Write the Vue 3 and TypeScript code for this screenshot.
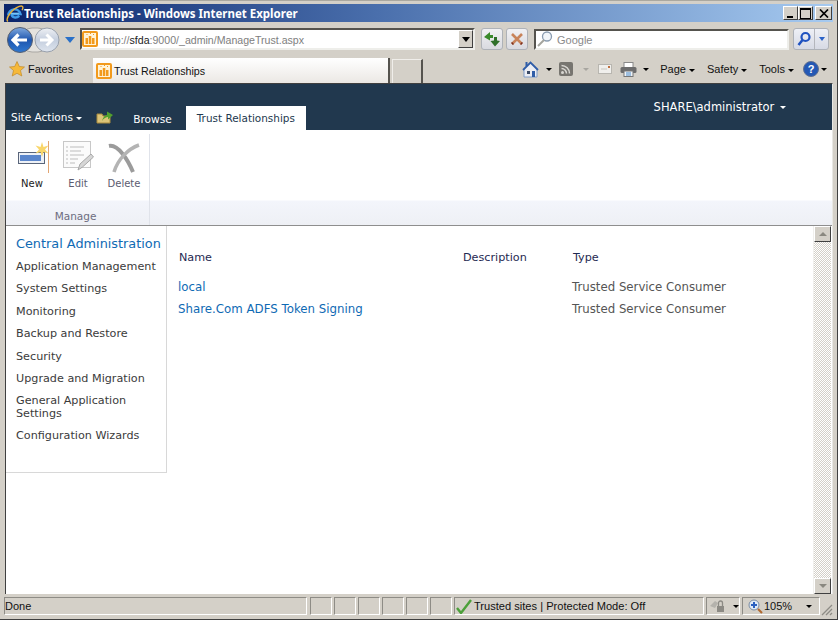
<script setup lang="ts">
const statusCells = [0, 1, 2, 3, 4, 5]
const navLinks = [
  'Application Management',
  'System Settings',
  'Monitoring',
  'Backup and Restore',
  'Security',
  'Upgrade and Migration',
  'General Application Settings',
  'Configuration Wizards'
]
const rows = [
  { name: 'local', type: 'Trusted Service Consumer' },
  { name: 'Share.Com ADFS Token Signing', type: 'Trusted Service Consumer' }
]
</script>

<template>
  <div class="window">
    <div class="titlebar">
      <svg class="ie-logo" width="19" height="19" viewBox="0 0 20 19">
        <path d="M3.500 11.500a6.500 6.500 0 0 1 12.800-1.500H7c0 4 5 5 8 2" fill="none" stroke="#3f9be8" stroke-width="2.600" />
        <path d="M6.500 9.500h8" stroke="#7cc4f4" stroke-width="1.500" />
        <path d="M3 18C0 15 7 5 15 2c3-1 5 0 3 4" fill="none" stroke="#e8b23a" stroke-width="1.500" />
      </svg>
      <span class="title-text">Trust Relationships - Windows Internet Explorer</span>
      <div class="winbtns">
        <span class="winbtn"><i class="min" /></span>
        <span class="winbtn"><i class="max" /></span>
        <span class="winbtn">
          <svg width="10" height="9" viewBox="0 0 10 9"><path d="M1 0.500l8 8M9 0.500l-8 8" stroke="#000" stroke-width="1.700" /></svg>
        </span>
      </div>
    </div>

    <div class="navrow">
      <div class="backfwd">
        <svg width="58" height="28" viewBox="0 0 58 28">
          <defs>
            <linearGradient id="backFill" x1="0" y1="0" x2="0" y2="1">
              <stop offset="0" stop-color="#7fa8de" />
              <stop offset=".5" stop-color="#1f56ae" />
              <stop offset="1" stop-color="#2f78d0" />
            </linearGradient>
            <linearGradient id="fwdFill" x1="0" y1="0" x2="0" y2="1">
              <stop offset="0" stop-color="#eef0f4" />
              <stop offset=".5" stop-color="#c4cede" />
              <stop offset="1" stop-color="#dfe5ee" />
            </linearGradient>
          </defs>
          <rect x="14" y="2" width="30" height="24" rx="12" fill="#e4e2de" stroke="#aaa8a4" />
          <circle cx="41" cy="14" r="12" fill="url(#fwdFill)" stroke="#98a0ac" />
          <path d="M34 14h12M40.500 8.500l5.500 5.500-5.500 5.500" fill="none" stroke="#fff" stroke-width="3" />
          <circle cx="14" cy="14" r="12.500" fill="url(#backFill)" stroke="#555e70" />
          <path d="M7 14h14M12.500 8.500L7 14l5.500 5.500" fill="none" stroke="#fff" stroke-width="3.200" />
        </svg>
        <svg class="navdrop" width="10" height="6" viewBox="0 0 10 6"><path d="M0 0h10L5 6z" fill="#2a70c8" /></svg>
      </div>
      <div class="address">
        <svg class="favicon" width="16" height="16" viewBox="0 0 16 16">
          <rect width="16" height="16" rx="2" fill="#f29a1c" />
          <rect x="2" y="2" width="12" height="12" fill="#fff3d8" />
          <path d="M3.500 7h2.500v6H3.500zM6.800 5h2.500v8H6.800zM10 7h2.500v6H10z" fill="#f29a1c" />
          <path d="M4.500 3.500h1M8 2.500h1M11 3.500h1" stroke="#f29a1c" />
        </svg>
        <span class="url">http://<b>sfda</b>:9000/_admin/ManageTrust.aspx</span>
        <span class="combo"><i /></span>
      </div>
      <span class="toolbtn refresh">
        <svg width="18" height="17" viewBox="0 0 18 17">
          <path d="M7 1L1 6l6 3.500V7h3V4H7z" fill="#3a8a2c" />
          <path d="M12 15.500l5-5.500-3-.5V6h-3v3.500L7.500 10z" fill="#2f6f2a" />
        </svg>
      </span>
      <span class="toolbtn stop">
        <svg width="14" height="14" viewBox="0 0 14 14">
          <path d="M2 2l10 10M12 2L2 12" stroke="#c8835a" stroke-width="2.600" />
          <path d="M3 11l-1 1M11 11l1 1" stroke="#7a2e20" stroke-width="2.600" />
        </svg>
      </span>
      <div class="search">
        <svg width="18" height="18" viewBox="0 0 18 18">
          <circle cx="11" cy="6.500" r="4.500" fill="#f2f6fa" stroke="#8a9cb0" stroke-width="1.300" />
          <path d="M8 10l-6 6" stroke="#a4a49e" stroke-width="2" />
        </svg>
        <span class="google">Google</span>
      </div>
      <div class="searchgo">
        <span class="go">
          <svg width="16" height="16" viewBox="0 0 16 16">
            <circle cx="9.500" cy="6" r="4" fill="none" stroke="#1f52c0" stroke-width="2.200" />
            <path d="M6.500 9l-4 5" stroke="#1f52c0" stroke-width="2.600" />
          </svg>
        </span>
        <span class="godrop"><i /></span>
      </div>
    </div>

    <div class="tabrow">
      <div class="favorites">
        <svg width="16" height="16" viewBox="0 0 16 16">
          <path d="M8 .5l2.300 5 5.200.5-4 3.500 1.300 5.500L8 12.300 3.200 15l1.300-5.500-4-3.500 5.200-.5z" fill="#f6b93a" stroke="#c08a2a" stroke-width=".7" />
        </svg>
        <span>Favorites</span>
      </div>
      <div class="tab">
        <svg class="favicon" width="16" height="16" viewBox="0 0 16 16">
          <rect width="16" height="16" rx="2" fill="#f29a1c" />
          <rect x="2" y="2" width="12" height="12" fill="#fff3d8" />
          <path d="M3.500 7h2.500v6H3.500zM6.800 5h2.500v8H6.800zM10 7h2.500v6H10z" fill="#f29a1c" />
          <path d="M4.500 3.500h1M8 2.500h1M11 3.500h1" stroke="#f29a1c" />
        </svg>
        <span class="tab-text">Trust Relationships</span>
      </div>
      <div class="newtab" />
      <div class="cmdbar">
        <svg class="home" width="17" height="17" viewBox="0 0 17 17">
          <path d="M8.500 1.500L2 8v8h13V8z" fill="#eceef4" stroke="#7e9cc8" />
          <path d="M1 9l7.500-7.500L16 9" fill="none" stroke="#2f5da8" stroke-width="1.800" />
          <rect x="3.500" y="1" width="2" height="4" fill="#2f5da8" />
          <rect x="5" y="10" width="3" height="3" fill="#3a4a66" />
          <rect x="10" y="10" width="3" height="6" fill="#2f5da8" />
        </svg>
        <i class="caret dark gap1" />
        <svg class="rss" width="14" height="14" viewBox="0 0 14 14">
          <rect width="14" height="14" rx="2" fill="#777570" />
          <circle cx="3.500" cy="10.500" r="1.500" fill="#d9d7d2" />
          <path d="M2.500 6.500a5 5 0 0 1 5 5M2.500 3.500a8 8 0 0 1 8 8" fill="none" stroke="#d9d7d2" stroke-width="1.500" />
        </svg>
        <i class="caret pale gap2" />
        <svg class="mail" width="14" height="10" viewBox="0 0 14 10">
          <rect x=".5" y=".5" width="13" height="9" fill="#f0efec" stroke="#b8b6b0" />
          <rect x="10" y="2" width="2" height="2" fill="#c07040" />
          <path d="M3 5h6" stroke="#c8c6c0" />
        </svg>
        <svg class="printer" width="17" height="15" viewBox="0 0 17 15">
          <rect x="4" y="0.500" width="9" height="6" fill="#fff" stroke="#888" />
          <rect x="0.500" y="5" width="16" height="6" rx="1.500" fill="#6c6c6c" />
          <rect x="4" y="9" width="9" height="5.500" fill="#eef2f6" stroke="#777" />
          <path d="M6 11h5M6 13h5" stroke="#4a8ac8" />
        </svg>
        <i class="caret dark gap3" />
        <span class="cmd first">Page <i class="caret dark" /></span>
        <span class="cmd">Safety <i class="caret dark" /></span>
        <span class="cmd">Tools <i class="caret dark" /></span>
        <svg class="help" width="16" height="16" viewBox="0 0 16 16">
          <circle cx="8" cy="8" r="7.500" fill="#2458b4" stroke="#607090" />
          <text x="8" y="12" text-anchor="middle" fill="#fff" font-size="11" font-weight="700" font-family="Liberation Sans, sans-serif">?</text>
        </svg>
        <i class="caret dark helpcaret" />
      </div>
    </div>

    <div class="page">
      <div class="site-header">
        <div class="ribbon-tabs">
          <span class="site-actions">Site Actions <i class="caret light" /></span>
          <svg class="navup" width="18" height="16" viewBox="0 0 18 16">
            <path d="M1 5h5l1 2h7v7H1z" fill="#dcc478" stroke="#a98b3c" />
            <path d="M6 12c1-4 3-6 5-6V2.500l6 3.500-5 4.500V8c-2 0-4 1-6 4z" fill="#52a02e" />
          </svg>
          <span class="rtab">Browse</span>
          <span class="rtab active">Trust Relationships</span>
        </div>
        <div class="user">SHARE\administrator <i class="caret light" /></div>
      </div>

      <div class="ribbon">
        <div class="group">
          <div class="buttons">
            <div class="rbtn active-btn">
              <svg width="34" height="32" viewBox="0 0 34 32">
                <rect x="3.500" y="11.500" width="26" height="11" fill="#eef1f6" stroke="#59657a" />
                <rect x="5" y="14" width="21" height="6" fill="#5a86cc" />
                <path d="M27 1l1.500 5 5-1.500-3.500 4 3.500 4-5-1.500-1.500 5-1.500-5-5 1.500 3.500-4-3.500-4 5 1.500z" fill="#f9d66a" />
                <path d="M33.500 0v32" stroke="#e2a572" />
              </svg>
              <span>New</span>
            </div>
            <div class="rbtn">
              <svg width="32" height="32" viewBox="0 0 32 32">
                <rect x="1.500" y="0.500" width="27" height="26" fill="#fbfbfb" stroke="#c8c8c8" />
                <path d="M8 6h14M4 6h2M8 10h11M4 10h2M8 14h14M4 14h2M8 18h8M4 18h2M8 22h5M4 22h2" stroke="#bdbdbd" />
                <path d="M16 29l2-6 11-10 2.500 3-11 10z" fill="#d6d6d6" stroke="#a8a8a8" />
              </svg>
              <span>Edit</span>
            </div>
            <div class="rbtn">
              <svg width="32" height="32" viewBox="0 0 32 32">
                <path d="M1 5c9-2 19 14 24 26" fill="none" stroke="#9b9b9b" stroke-width="4" />
                <path d="M31 4C20 8 10 18 6 31" fill="none" stroke="#b4b4b4" stroke-width="3.500" />
              </svg>
              <span>Delete</span>
            </div>
          </div>
          <div class="group-label">Manage</div>
        </div>
        <div class="ribbon-rest" />
      </div>

      <div class="body">
        <div class="content">
          <nav class="sidenav">
            <a class="nav-head">Central Administration</a>
            <a v-for="link in navLinks" :key="link" class="nav-link">{{ link }}</a>
          </nav>
          <div class="main">
            <div class="row head">
              <span class="c-name">Name</span>
              <span class="c-desc">Description</span>
              <span class="c-type">Type</span>
            </div>
            <div v-for="row in rows" :key="row.name" class="row">
              <a class="c-name link">{{ row.name }}</a>
              <span class="c-desc" />
              <span class="c-type muted">{{ row.type }}</span>
            </div>
          </div>
        </div>
        <div class="scrollbar">
          <span class="sb-btn"><i class="up" /></span>
          <div class="sb-track" />
          <span class="sb-btn"><i class="down" /></span>
        </div>
      </div>
    </div>

    <div class="statusbar">
      <span class="st done">Done</span>
      <span v-for="c in statusCells" :key="c" class="st cell" />
      <span class="st zone">
        <svg width="16" height="15" viewBox="0 0 16 15"><path d="M1 9l4 5L15 1" fill="none" stroke="#4ca03a" stroke-width="2.400" /></svg>
        <span>Trusted sites | Protected Mode: Off</span>
      </span>
      <span class="st lock">
        <svg width="16" height="14" viewBox="0 0 16 14">
          <path d="M0 7l5-5 3 2-3 5z" fill="#b4b2ac" />
          <rect x="7" y="7" width="7" height="6" fill="#8c8a84" />
          <path d="M8.500 7V4a2 2 0 0 1 4 0v3" fill="none" stroke="#8c8a84" stroke-width="1.300" />
        </svg>
        <i class="caret dark" />
      </span>
      <span class="st zoom">
        <svg width="15" height="15" viewBox="0 0 15 15">
          <circle cx="6" cy="6" r="5" fill="#dfeaf6" stroke="#7a8ca4" />
          <path d="M6 3v6M3 6h6" stroke="#2a60c0" stroke-width="2" />
          <path d="M10 10l4 4" stroke="#b06a30" stroke-width="2.200" />
        </svg>
        <span>105%</span>
        <i class="caret dark zoomcaret" />
      </span>
      <svg class="grip" width="13" height="13" viewBox="0 0 13 13">
        <path d="M12 2L2 12M12 6l-6 6M12 10l-2 2" stroke="#8e8c86" stroke-width="1.300" />
      </svg>
    </div>
  </div>
</template>

<style scoped>
.window {
  width: 838px;
  height: 620px;
  box-sizing: border-box;
  padding: 3px 4px 3px;
  background: #d4d0c8;
  border-top: 1px solid #aaa8a0;
  border-bottom: 1px solid #404040;
  border-right: 1px solid #404040;
  display: flex;
  flex-direction: column;
  font-family: "Liberation Sans", "Noto Sans", sans-serif;
  overflow: hidden;
}
i {
  display: inline-block;
  font-style: normal;
}
.titlebar {
  height: 18px;
  flex: none;
  display: flex;
  align-items: center;
  background: linear-gradient(90deg, #0a246a 0%, #4a6fac 45%, #a6caf0 100%);
}
.ie-logo {
  margin: 0 0 0 1px;
  flex: none;
}
.title-text {
  color: #fff;
  font-family: "Noto Sans", sans-serif;
  font-size: 11.500px;
  font-weight: 700;
}
.winbtns {
  margin-left: auto;
  margin-right: 1px;
  display: flex;
}
.winbtn {
  width: 15px;
  height: 14px;
  box-sizing: border-box;
  background: #d4d0c8;
  border: 1px solid;
  border-color: #fff #404040 #404040 #fff;
  display: flex;
  align-items: center;
  justify-content: center;
}
.winbtn:last-child {
  width: 17px;
  margin-left: 2px;
}
.min {
  width: 6px;
  height: 2px;
  background: #000;
  margin-top: 7px;
  margin-right: 2px;
}
.max {
  width: 9px;
  height: 8px;
  border: 1px solid #000;
  border-top-width: 2px;
}
.navrow {
  height: 36px;
  flex: none;
  display: flex;
  align-items: center;
}
.backfwd {
  width: 75px;
  display: flex;
  align-items: center;
  padding-left: 2px;
  box-sizing: border-box;
  flex: none;
}
.navdrop {
  margin-left: 1px;
}
.address {
  width: 395px;
  height: 22px;
  margin: -2px 0 0 1px;
  flex: none;
  box-sizing: border-box;
  background: #fff;
  border: 2px solid;
  border-color: #55534e #eeeeea #eeeeea #55534e;
  display: flex;
  align-items: center;
  font-size: 10.600px;
  color: #7e7e7e;
}
.url {
  margin-left: 5px;
  padding-top: 1px;
}
.url b {
  font-weight: 400;
  color: #222;
}
.favicon {
  flex: none;
}
.combo {
  margin-left: auto;
  width: 15px;
  height: 18px;
  box-sizing: border-box;
  background: #d4d0c8;
  border: 1px solid;
  border-color: #fff #404040 #404040 #fff;
  display: flex;
  align-items: center;
  justify-content: center;
}
.combo i {
  border: 4px solid transparent;
  border-top: 5px solid #000;
  border-bottom: 0;
}
.toolbtn {
  width: 22px;
  height: 22px;
  margin-top: -2px;
  box-sizing: border-box;
  flex: none;
  border: 1px solid #aeb2b8;
  border-radius: 3px;
  background: linear-gradient(#f1f1f4, #d9dae0);
  display: flex;
  align-items: center;
  justify-content: center;
}
.refresh {
  margin-left: 6px;
}
.stop {
  margin-left: 3px;
}
.search {
  width: 255px;
  height: 21px;
  margin: -2px 0 0 6px;
  flex: none;
  box-sizing: border-box;
  background: #fff;
  border: 2px solid;
  border-color: #55534e #eeeeea #eeeeea #55534e;
  display: flex;
  align-items: center;
  gap: 3px;
  font-size: 11px;
  color: #8a8a8a;
}
.google {
  padding-top: 1px;
}
.searchgo {
  display: flex;
  height: 22px;
  margin: -2px 0 0 4px;
  box-sizing: border-box;
  border: 1px solid #aeb2b8;
  border-radius: 3px;
  background: linear-gradient(#eef0f6, #d7dae4);
}
.go {
  width: 20px;
  display: flex;
  align-items: center;
  justify-content: center;
  border-right: 1px solid #b4b6bc;
}
.godrop {
  width: 13px;
  display: flex;
  align-items: center;
  justify-content: center;
}
.godrop i {
  border: 3px solid transparent;
  border-top: 4px solid #2a62c8;
  border-bottom: 0;
}
.tabrow {
  height: 25px;
  flex: none;
  display: flex;
  align-items: flex-start;
  font-size: 11px;
  color: #111;
}
.favorites {
  width: 89px;
  height: 22px;
  display: flex;
  align-items: center;
  gap: 3px;
  padding-left: 5px;
  box-sizing: border-box;
  flex: none;
}
.tab {
  width: 297px;
  height: 25px;
  flex: none;
  box-sizing: border-box;
  background: linear-gradient(#fff, #ebe8e4);
  border-right: 2px solid #55534e;
  display: flex;
  align-items: center;
  gap: 2px;
  padding-left: 3px;
}
.tab-text {
  font-size: 10.700px;
}
.newtab {
  width: 31px;
  height: 24px;
  margin: 1px 0 0 2px;
  box-sizing: border-box;
  border: 1px solid #f0eeea;
  border-right: 2px solid #55534e;
  border-bottom: 0;
  flex: none;
}
.cmdbar {
  flex: 1;
  height: 22px;
  display: flex;
  align-items: center;
  justify-content: flex-end;
  padding-right: 6px;
}
.cmd {
  margin-left: 12px;
  white-space: nowrap;
}
.cmd.first {
  margin-left: 11px;
}
.cmd .caret {
  margin-left: 0;
}
.help {
  margin-left: 9px;
}
.helpcaret {
  margin-left: 1px;
}
.caret {
  border: 3px solid transparent;
  border-top: 3px solid #000;
  border-bottom: 0;
  vertical-align: middle;
  margin-left: 2px;
}
.caret.light {
  border-top-color: #fff;
}
.caret.pale {
  border-top-color: #a8a6a0;
}
.gap1 {
  margin-left: 7px;
}
.rss {
  margin-left: 7px;
}
.gap2 {
  margin-left: 10px;
}
.mail {
  margin-left: 9px;
}
.printer {
  margin-left: 8px;
}
.gap3 {
  margin-left: 6px;
}
.page {
  flex: 1;
  min-height: 0;
  display: flex;
  flex-direction: column;
  margin-left: 1px;
  border-top: 1px solid #404040;
  border-left: 1px solid #404040;
  border-right: 1px solid #e8e8e4;
  background: #fff;
  font-family: "DejaVu Sans", Verdana, sans-serif;
  font-size: 11.500px;
}
.site-header {
  height: 46px;
  flex: none;
  background: #21384e;
  color: #fff;
  display: flex;
  align-items: flex-end;
  justify-content: space-between;
}
.user {
  align-self: flex-start;
  margin: 16px 46px 0 0;
  line-height: 14px;
}
.ribbon-tabs {
  display: flex;
  align-items: flex-end;
  height: 24px;
}
.site-actions {
  align-self: center;
  margin: 0 0 2px 5px;
  font-size: 10.500px;
  white-space: nowrap;
}
.site-actions .caret {
  margin-left: 0;
}
.navup {
  align-self: center;
  margin: 0 0 3px 14px;
}
.rtab {
  padding: 0 12px;
  height: 24px;
  line-height: 26px;
  font-size: 10.600px;
  margin-left: 7px;
  white-space: nowrap;
}
.rtab + .rtab {
  margin-left: 2px;
}
.rtab.active {
  background: #fff;
  color: #22384e;
  line-height: 25px;
  padding: 0 11px;
  font-size: 10.450px;
}
.ribbon {
  height: 96px;
  flex: none;
  display: flex;
  border-bottom: 1px solid #8e8e8e;
  box-sizing: border-box;
  background: linear-gradient(#fff 0, #fff 70px, #f3f5fb 71px, #eef0f5 100%);
}
.group {
  width: 144px;
  flex: none;
  display: flex;
  flex-direction: column;
  border-right: 1px solid #e0e3ea;
  box-sizing: border-box;
  margin-top: 4px;
}
.buttons {
  height: 66px;
  display: flex;
  padding: 7px 0 0 3px;
  box-sizing: border-box;
}
.rbtn {
  width: 46px;
  display: flex;
  flex-direction: column;
  align-items: center;
  font-size: 10px;
  color: #5c5c70;
  gap: 5px;
}
.active-btn {
  color: #222;
}
.group-label {
  flex: 1;
  text-align: center;
  font-size: 10.500px;
  color: #6d6d80;
  padding-top: 10px;
  padding-right: 4px;
}
.ribbon-rest {
  flex: 1;
}
.body {
  flex: 1;
  min-height: 0;
  display: flex;
}
.content {
  flex: 1;
  display: flex;
  align-items: flex-start;
}
.sidenav {
  width: 161px;
  height: 247px;
  flex: none;
  box-sizing: border-box;
  border-right: 1px solid #d8d8d8;
  border-bottom: 1px solid #d8d8d8;
  padding: 8px 0 0 10px;
  display: flex;
  flex-direction: column;
}
.nav-head {
  color: #0f6ab4;
  font-size: 12.850px;
  line-height: 20px;
  margin-bottom: 2px;
  white-space: nowrap;
}
.nav-link {
  color: #3b3b3b;
  font-size: 11.200px;
  line-height: 12.400px;
  padding: 5px 0;
}
.main {
  flex: 1;
  padding-top: 20px;
}
.row {
  display: flex;
  height: 22px;
  align-items: center;
  padding-left: 12px;
  white-space: nowrap;
}
.row.head {
  margin-bottom: 8px;
  color: #1f2a52;
  font-size: 11.200px;
}
.c-name {
  width: 284px;
  flex: none;
}
.c-desc {
  width: 110px;
  flex: none;
}
.link {
  color: #0f6ab4;
  font-size: 11.800px;
  margin-left: -1px;
  width: 285px;
}
.muted {
  color: #555;
  font-size: 11.750px;
  margin-left: -1px;
}
.scrollbar {
  width: 17px;
  flex: none;
  margin-right: 1px;
  display: flex;
  flex-direction: column;
  border-left: 1px solid #f0efec;
}
.sb-btn {
  height: 16px;
  flex: none;
  box-sizing: border-box;
  background: #d4d0c8;
  border: 1px solid;
  border-color: #fff #404040 #404040 #fff;
  display: flex;
  align-items: center;
  justify-content: center;
}
.sb-btn i {
  border: 4px solid transparent;
}
.sb-btn .up {
  border-bottom: 4px solid #8a8880;
  border-top: 0;
}
.sb-btn .down {
  border-top: 4px solid #8a8880;
  border-bottom: 0;
}
.sb-track {
  flex: 1;
  background: repeating-conic-gradient(#d4d0c8 0 25%, #fff 0 50%) 0 0 / 2px 2px;
}
.statusbar {
  height: 21px;
  flex: none;
  display: flex;
  align-items: center;
  font-size: 11px;
  color: #111;
  padding-top: 1px;
  position: relative;
}
.st {
  height: 18px;
  box-sizing: border-box;
  border: 1px solid;
  border-color: #8e8c86 #fff #fff #8e8c86;
  padding-top: 1px;
  display: flex;
  align-items: center;
  flex: none;
}
.done {
  width: 303px;
  padding-left: 0;
}
.cell {
  width: 22px;
  margin-left: 2px;
}
.cell:nth-of-type(2) {
  margin-left: 3px;
}
.zone {
  width: 250px;
  margin-left: 2px;
  gap: 2px;
  padding-left: 1px;
  font-size: 11.100px;
}
.lock {
  width: 34px;
  margin-left: 2px;
  gap: 5px;
  padding-left: 3px;
}
.zoom {
  width: 78px;
  margin-left: 2px;
  gap: 1px;
  padding-left: 5px;
}
.zoomcaret {
  margin-left: 13px;
}
.grip {
  position: absolute;
  right: 0;
  bottom: 0;
}
</style>
